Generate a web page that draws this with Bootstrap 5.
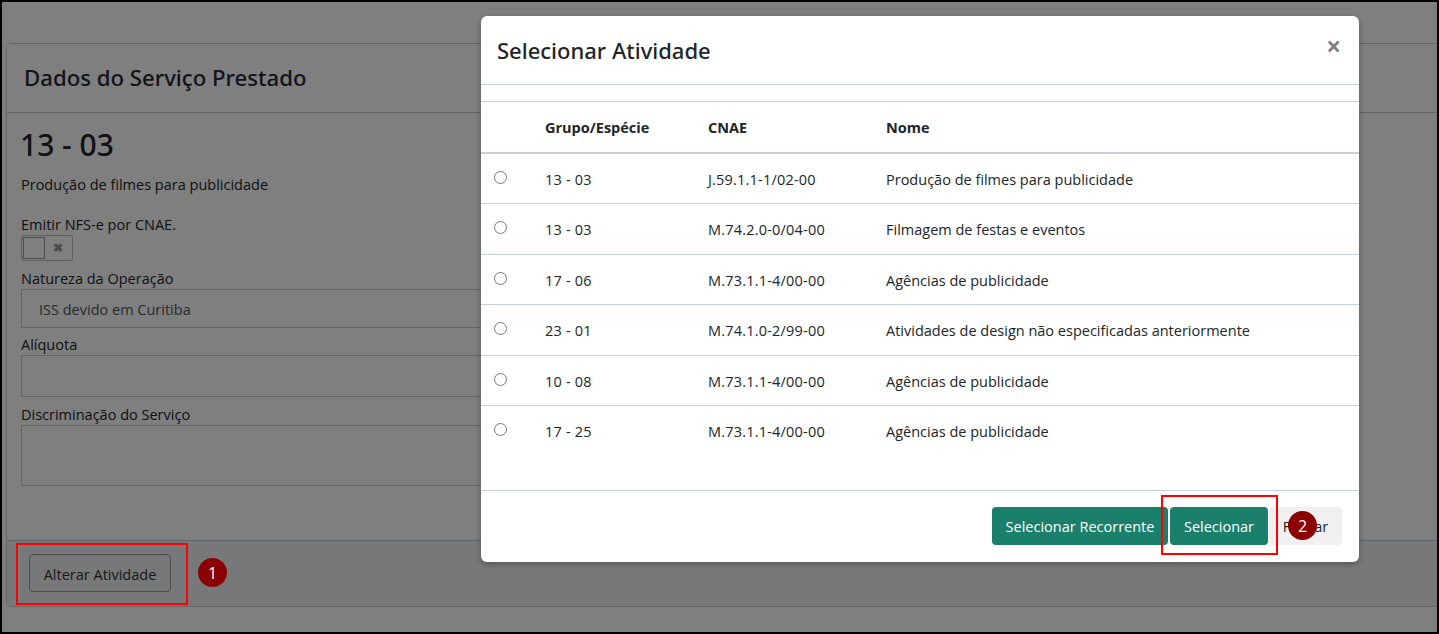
<!DOCTYPE html>
<html lang="pt-BR"><head><meta charset="utf-8"><title>Selecionar Atividade</title>
<link href="https://cdn.jsdelivr.net/npm/bootstrap@5.3.0/dist/css/bootstrap.min.css" rel="stylesheet">
<style>
html,body{height:634px;overflow:hidden;background:#000}
body{font-family:"Open Sans","Noto Sans",sans-serif;font-size:14.5px;color:#212529}
.shot-frame{position:relative;height:630px;width:1435px;margin:2px 0 0 2px;background:#fff;overflow:hidden;padding:41px 0 0 4px}
.svc-card{height:564px;width:1500px;border:1px solid #c5ccd2;border-radius:5px;background:#fff}
.svc-head{height:69px;padding:0 17px;border-bottom:1px solid #c5ccd2;background:#fff}
.svc-head h5{font-family:"Noto Sans",sans-serif;font-size:22.2px;font-weight:500;margin:0;padding-top:1px;color:#1e2a38}
.svc-body{height:427px;padding:15px 14px;width:1300px}
.svc-code{font-family:"Noto Sans",sans-serif;font-size:30px;font-weight:500;margin:0 0 13px -1px;line-height:34px}
.svc-label{line-height:20px;margin:0}
.svc-desc{margin-bottom:20px}
.toggle-box{width:52px;height:26px;border:1px solid #bbb;border-radius:3px;padding:1px}
.toggle-knob{width:22px;height:22px;border:1px solid #999;background:#fff}
.toggle-x{font-size:12px;font-weight:700;color:#999;margin-left:8px;line-height:20px}
.svc-field{border:1px solid #ccc;background:#fff;color:#555;padding:0 17px;display:flex;align-items:center}
.field-nat{height:39px;padding-top:2px}.field-ali{height:42px}.field-txt{height:61px}
.gap-nat{margin-top:8px}.gap-ali{margin-top:7px}.gap-txt{margin-top:8px}
.svc-foot{height:66px;background:#eff0f3;border-top:1px solid #c5ccd2;padding:13px 22px}
.alter-btn{height:38px;width:142px;border:1px solid #999;color:#333;background:transparent;font-size:14.5px;padding:3px 0 0;border-radius:4px}
.shade{position:absolute;inset:0;background:rgba(0,0,0,.5)}
.pick-modal{position:absolute;left:479px;top:14px;width:878px;height:546px;background:#fff;border-radius:6px;box-shadow:0 2px 6px rgba(0,0,0,.3);display:flex;flex-direction:column}
.pick-head{height:69px;border-bottom:1px solid #c5d1da;padding:0 16px}
.pick-head h5{font-family:"Noto Sans",sans-serif;font-size:22px;font-weight:500;margin:0;color:#212529}
.pick-close{border:0;background:none;font-weight:700;font-size:26px;line-height:1;color:#808080;padding:0;margin:-8px 2px 0 0}
.pick-body{flex:1;padding-top:16px}
.pick-table{table-layout:fixed;width:100%;margin:0;--bs-table-border-color:#c5d1da;border-top:1px solid #c5d1da}
.pick-table th{height:51px;vertical-align:middle;font-weight:700;border-bottom:2px solid #c5d1da;padding:3px 8px 0}
.pick-table td{height:51px;padding:2px 8px 0;vertical-align:middle}
.pick-table tbody tr:nth-child(n+3):nth-child(odd) td{height:50px}
.pick-table tbody tr:first-child td{padding-top:3px}
.pick-table tr:last-child td{border-bottom:0}
.pick-table input{display:block;margin:0 0 5px 5px}
.pick-table .code-cell{letter-spacing:.2px}
.pick-foot{height:72px;border-top:1px solid #c5d1da;padding:16px 17px;gap:2px}
.act-btn{height:38px;background:#1a7f6b;border:0;color:#fff;font-size:14.5px;padding:2px 0 0;border-radius:4px}
.act-rec{width:176px}.act-sel{width:98px}
.act-close{height:38px;width:73px;background:#f0f0f0;border:0;color:#212529;font-size:14.5px;padding:2px 0 0;border-radius:4px;margin-left:-1px}
.note-box{position:absolute;border:2px solid #f00;pointer-events:none}
.note-a{left:14px;top:541px;width:172px;height:62px}
.note-b{left:1159px;top:493px;width:117px;height:60px}
.note-dot{position:absolute;border-radius:50%;background:#8b0000;color:#fff;font-size:16px;display:flex;align-items:center;justify-content:center;width:29px;height:29px}
.dot-a{left:196px;top:556px}
.dot-b{left:1286px;top:509px}
</style></head><body>
<div class="shot-frame">
  <div class="svc-card">
    <div class="svc-head d-flex align-items-center"><h5>Dados do Serviço Prestado</h5></div>
    <div class="svc-body">
      <h3 class="svc-code">13 - 03</h3>
      <p class="svc-label svc-desc">Produção de filmes para publicidade</p>
      <div class="svc-label">Emitir NFS-e por CNAE.</div>
      <div class="toggle-box d-flex align-items-center"><div class="toggle-knob"></div><span class="toggle-x">✖</span></div>
      <div class="svc-label gap-nat">Natureza da Operação</div>
      <div class="svc-field field-nat">ISS devido em Curitiba</div>
      <div class="svc-label gap-ali">Alíquota</div>
      <div class="svc-field field-ali"></div>
      <div class="svc-label gap-txt">Discriminação do Serviço</div>
      <div class="svc-field field-txt"></div>
    </div>
    <div class="svc-foot"><button class="alter-btn">Alterar Atividade</button></div>
  </div>
  <div class="shade"></div>
  <div class="pick-modal">
    <div class="pick-head d-flex align-items-center justify-content-between"><h5>Selecionar Atividade</h5><button class="pick-close">×</button></div>
    <div class="pick-body">
      <table class="table pick-table">
        <colgroup><col style="width:56px"><col style="width:163px"><col style="width:178px"><col></colgroup>
        <thead><tr><th></th><th>Grupo/Espécie</th><th>CNAE</th><th>Nome</th></tr></thead>
        <tbody>
          <tr><td><input type="radio" name="a"></td><td class="code-cell">13 - 03</td><td class="code-cell">J.59.1.1-1/02-00</td><td>Produção de filmes para publicidade</td></tr>
          <tr><td><input type="radio" name="a"></td><td class="code-cell">13 - 03</td><td class="code-cell">M.74.2.0-0/04-00</td><td>Filmagem de festas e eventos</td></tr>
          <tr><td><input type="radio" name="a"></td><td class="code-cell">17 - 06</td><td class="code-cell">M.73.1.1-4/00-00</td><td>Agências de publicidade</td></tr>
          <tr><td><input type="radio" name="a"></td><td class="code-cell">23 - 01</td><td class="code-cell">M.74.1.0-2/99-00</td><td>Atividades de design não especificadas anteriormente</td></tr>
          <tr><td><input type="radio" name="a"></td><td class="code-cell">10 - 08</td><td class="code-cell">M.73.1.1-4/00-00</td><td>Agências de publicidade</td></tr>
          <tr><td><input type="radio" name="a"></td><td class="code-cell">17 - 25</td><td class="code-cell">M.73.1.1-4/00-00</td><td>Agências de publicidade</td></tr>
        </tbody>
      </table>
    </div>
    <div class="pick-foot d-flex justify-content-end">
      <button class="act-btn act-rec">Selecionar Recorrente</button>
      <button class="act-btn act-sel">Selecionar</button>
      <button class="act-close">Fechar</button>
    </div>
  </div>
  <div class="note-box note-a"></div>
  <div class="note-box note-b"></div>
  <div class="note-dot dot-a">1</div>
  <div class="note-dot dot-b">2</div>
</div>
</body></html>
